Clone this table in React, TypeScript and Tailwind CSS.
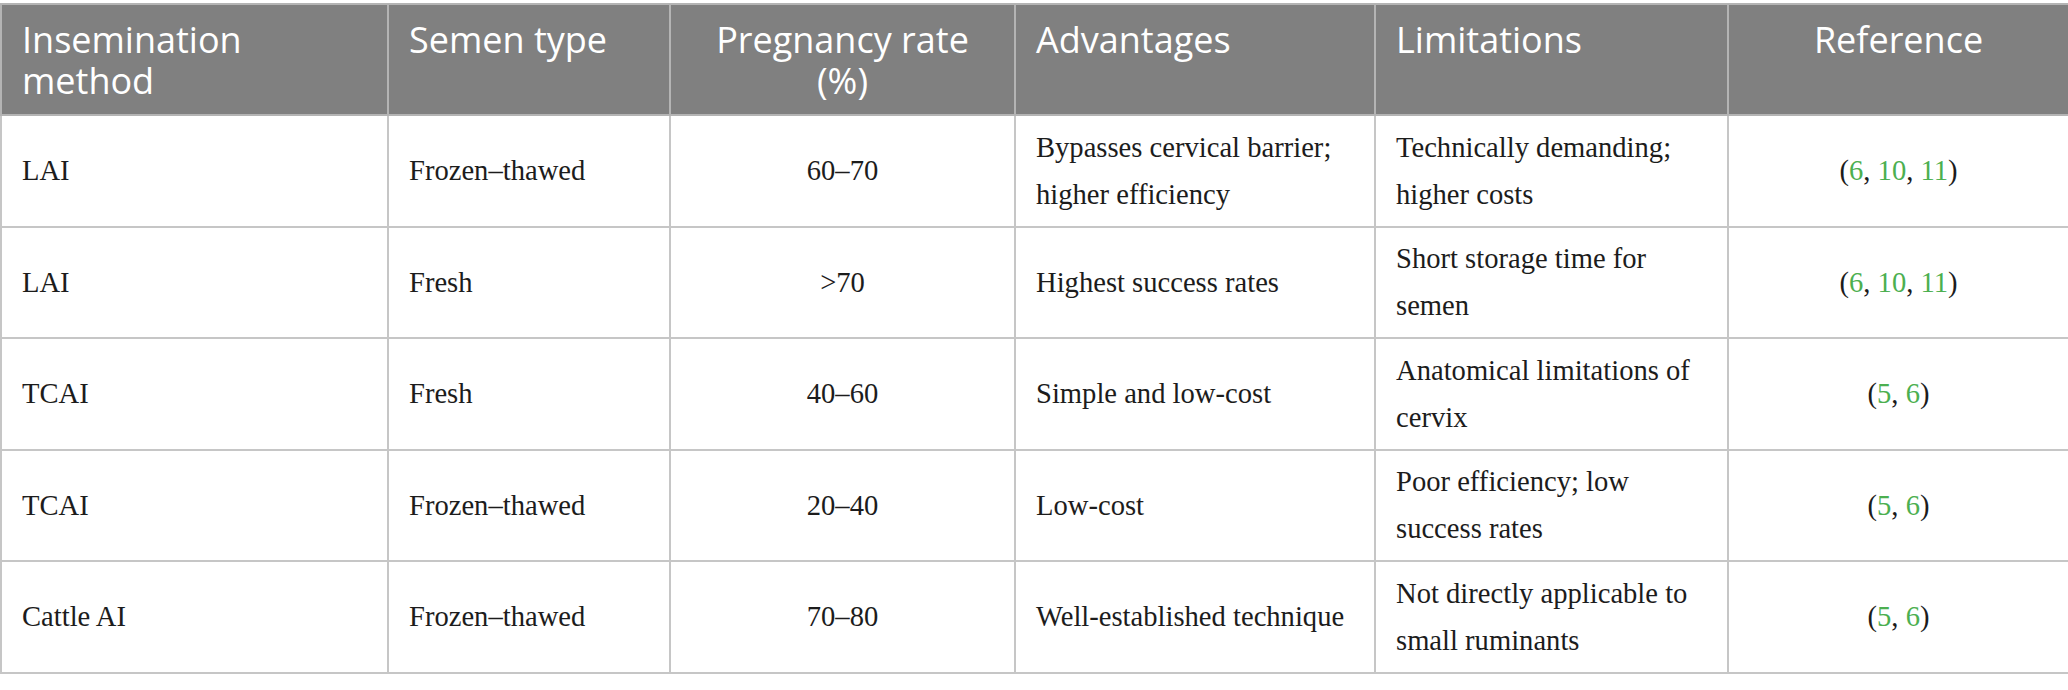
import React from "react";

type Row = {
  method: string;
  semen: string;
  rate: string;
  adv: string[];
  lim: string[];
  refs: string[];
};

const rows: Row[] = [
  {
    method: "LAI",
    semen: "Frozen–thawed",
    rate: "60–70",
    adv: ["Bypasses cervical barrier;", "higher efficiency"],
    lim: ["Technically demanding;", "higher costs"],
    refs: ["6", "10", "11"],
  },
  {
    method: "LAI",
    semen: "Fresh",
    rate: ">70",
    adv: ["Highest success rates"],
    lim: ["Short storage time for", "semen"],
    refs: ["6", "10", "11"],
  },
  {
    method: "TCAI",
    semen: "Fresh",
    rate: "40–60",
    adv: ["Simple and low-cost"],
    lim: ["Anatomical limitations of", "cervix"],
    refs: ["5", "6"],
  },
  {
    method: "TCAI",
    semen: "Frozen–thawed",
    rate: "20–40",
    adv: ["Low-cost"],
    lim: ["Poor efficiency; low", "success rates"],
    refs: ["5", "6"],
  },
  {
    method: "Cattle AI",
    semen: "Frozen–thawed",
    rate: "70–80",
    adv: ["Well-established technique"],
    lim: ["Not directly applicable to", "small ruminants"],
    refs: ["5", "6"],
  },
];

const th =
  "align-top border-2 border-[#b4b4b4] px-5 pt-[14px] font-normal text-white text-[36px] leading-[41px]";
const td =
  "align-middle border-2 border-[#c6c6c6] px-5 text-[28.6px] leading-[47px] text-[#1c1c1c]";

function Lines({ lines }: { lines: string[] }) {
  return (
    <>
      {lines.map((l, i) => (
        <div key={i}>{l}</div>
      ))}
    </>
  );
}

export default function App() {
  return (
    <div className="w-[2068px] h-[690px] bg-white pt-[3px]">
      <table
        className="w-[2068px] table-fixed border-collapse border-2 border-[#c6c6c6]"
        style={{ fontFamily: '"Liberation Serif", serif' }}
      >
        <colgroup>
          <col className="w-[387px]" />
          <col className="w-[282px]" />
          <col className="w-[345px]" />
          <col className="w-[360px]" />
          <col className="w-[353px]" />
          <col className="w-[341px]" />
        </colgroup>
        <thead>
          <tr
            className="h-[111px] bg-[#808080]"
            style={{ fontFamily: '"Open Sans", "Noto Sans", sans-serif' }}
          >
            <th className={`${th} text-left`}>
              Insemination
              <br />
              method
            </th>
            <th className={`${th} text-left`}>Semen type</th>
            <th className={`${th} text-center`}>
              Pregnancy rate
              <br />
              (%)
            </th>
            <th className={`${th} text-left`}>Advantages</th>
            <th className={`${th} text-left`}>Limitations</th>
            <th className={`${th} text-center`}>Reference</th>
          </tr>
        </thead>
        <tbody>
          {rows.map((r, i) => (
            <tr key={i} className="h-[111.5px]">
              <td className={`${td} text-left`}>{r.method}</td>
              <td className={`${td} text-left`}>{r.semen}</td>
              <td className={`${td} text-center`}>{r.rate}</td>
              <td className={`${td} text-left`}>
                <Lines lines={r.adv} />
              </td>
              <td className={`${td} text-left`}>
                <Lines lines={r.lim} />
              </td>
              <td className={`${td} text-center`}>
                (
                {r.refs.map((n, j) => (
                  <React.Fragment key={j}>
                    <span className="text-[#4caf50]">{n}</span>
                    {j < r.refs.length - 1 ? ", " : ""}
                  </React.Fragment>
                ))}
                )
              </td>
            </tr>
          ))}
        </tbody>
      </table>
    </div>
  );
}
